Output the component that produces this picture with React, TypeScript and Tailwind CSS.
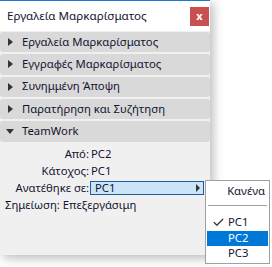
import { Check } from "lucide-react";

const font = { fontFamily: '"Noto Sans", "DejaVu Sans", sans-serif' };

function Header({ label, open = false }: { label: string; open?: boolean }) {
  return (
    <div className="h-[20.33px] rounded-[3px] bg-[#d9d9d9] flex items-center text-[11.3px] text-[#141432]">
      <div className="w-[22px] flex justify-center">
        {open ? (
          <span className="w-0 h-0 border-l-[4px] border-r-[4px] border-t-[5px] border-l-transparent border-r-transparent border-t-[#333] ml-[-2px]" />
        ) : (
          <span className="w-0 h-0 border-t-[4px] border-b-[4px] border-l-[5px] border-t-transparent border-b-transparent border-l-[#333] ml-[-2px]" />
        )}
      </div>
      <span>{label}</span>
    </div>
  );
}

export default function App() {
  return (
    <div className="relative w-[272px] h-[267px] bg-white overflow-hidden" style={font}>
      <div className="w-[210px] h-[255px] bg-[#f0f0f0] border-t border-[#1a7ad4] shadow-[3px_3px_10px_rgba(0,0,0,0.28)] flex flex-col">
        <div className="h-[30px] bg-white flex items-center justify-between pl-[7px] pr-[1px]">
          <span className="text-[11.6px] text-[#141432]">Εργαλεία Μαρκαρίσματος</span>
          <div className="w-[19px] h-[19px] bg-[#c85050] text-white text-[11px] font-bold flex items-center justify-center leading-none pb-[2px]">
            x
          </div>
        </div>
        <div className="flex flex-col gap-[2px] pt-[1px]">
          <Header label="Εργαλεία Μαρκαρίσματος" />
          <Header label="Εγγραφές Μαρκαρίσματος" />
          <Header label="Συνημμένη Άποψη" />
          <Header label="Παρατήρηση και Συζήτηση" />
          <Header label="TeamWork" open />
        </div>
        <div className="pt-[4px] text-[11.3px] text-[#141432]">
          <div className="grid grid-cols-[89px_1fr] items-center">
            <div className="h-[17px] flex items-center justify-end">Από:</div>
            <div className="h-[17px] flex items-center pl-[2px]">PC2</div>
            <div className="h-[17px] flex items-center justify-end">Κάτοχος:</div>
            <div className="h-[17px] flex items-center pl-[2px]">PC1</div>
            <div className="h-[17px] flex items-center justify-end">Ανατέθηκε σε:</div>
            <div className="h-[17px] flex items-center pl-[1px]">
              <div className="w-[114px] h-[14px] border border-[#1f5c99] bg-[#cce4f7] flex items-center justify-between pl-[4px] pr-[3px]">
                <span className="leading-none">PC1</span>
                <span className="w-0 h-0 border-t-[4px] border-b-[4px] border-l-[4px] border-t-transparent border-b-transparent border-l-[#333]" />
              </div>
            </div>
          </div>
          <div className="h-[17px] flex items-center pl-[5px]">Σημείωση: Επεξεργάσιμη</div>
        </div>
      </div>

      <div className="absolute left-[205px] top-[180px] w-[65px] h-[84px] bg-white border border-[#a0a0a0] text-[11.3px] text-[#141432]">
        <div className="h-[20px] flex items-center justify-end pr-[4px]">Κανένα</div>
        <div className="mx-[2px] mt-[4px] mb-[9px] h-px bg-[#a0a0a0]" />
        <div className="h-[15.5px] flex items-center relative pl-[22px]">
          <Check className="absolute left-[6px] w-[13px] h-[13px] text-[#333]" strokeWidth={2.2} />
          PC1
        </div>
        <div className="h-[15.5px] mx-[1px] flex items-center pl-[21px] bg-[#0078d7] text-white">PC2</div>
        <div className="h-[15.5px] flex items-center pl-[22px]">PC3</div>
      </div>
    </div>
  );
}
